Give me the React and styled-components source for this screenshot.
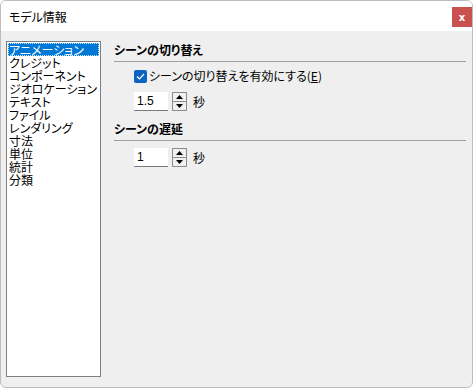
import React from "react";
import styled, { createGlobalStyle } from "styled-components";

const Global = createGlobalStyle`
  html, body { margin: 0; padding: 0; background: #ffffff; }
  body {
    font-family: "Noto Sans CJK JP", "Noto Sans", sans-serif;
    font-size: 12px;
    color: #000;
    font-feature-settings: "palt" 1;
  }
`;

const Win = styled.div`
  box-sizing: border-box;
  width: 473px;
  height: 388px;
  border: 1px solid #bdbdbd;
  border-radius: 6px;
  overflow: hidden;
  display: flex;
  flex-direction: column;
  background: #efefef;
`;

const TitleBar = styled.div`
  height: 30px;
  background: #ffffff;
  display: flex;
  align-items: center;
  justify-content: space-between;
  padding: 0 0 0 8px;
  flex-shrink: 0;
`;

const Title = styled.div`
  font-size: 12px;
  color: #000;
`;

const Close = styled.div`
  width: 20px;
  height: 20px;
  margin-top: 2px;
  background: #c9514f;
  color: #fff;
  font-family: "DejaVu Sans", sans-serif;
  font-weight: bold;
  font-size: 10px;
  display: flex;
  align-items: center;
  justify-content: center;
`;

const Body = styled.div`
  flex: 1;
  display: flex;
  padding: 10px 6px 10px 5px;
  gap: 13px;
`;

const List = styled.div`
  box-sizing: border-box;
  width: 95px;
  height: 336px;
  background: #fff;
  border: 1px solid #7a7f86;
  padding: 1px;
  display: flex;
  flex-direction: column;
`;

const Item = styled.div`
  height: 13px;
  line-height: 13px;
  font-size: 12px;
  padding-left: 1px;
  white-space: nowrap;
  background: ${(p) => (p.$sel ? "#0078d7" : "transparent")};
  color: ${(p) => (p.$sel ? "#fff" : "#000")};
  outline: ${(p) => (p.$sel ? "1px dotted #cfe4f7" : "none")};
  outline-offset: -1px;
`;

const Panel = styled.div`
  flex: 1;
  display: flex;
  flex-direction: column;
  padding-top: 1px;
`;

const Header = styled.div`
  font-weight: bold;
  font-size: 12px;
  line-height: 16px;
  padding-bottom: 3px;
  border-bottom: 1px solid #a0a0a0;
  margin-top: ${(p) => p.$top || 0}px;
`;

const Row = styled.div`
  display: flex;
  align-items: center;
  padding-left: ${(p) => p.$indent || 20}px;
  margin-top: ${(p) => p.$top || 0}px;
  gap: 4px;
`;

const Check = styled.div`
  width: 13px;
  height: 13px;
  border-radius: 2px;
  background: #0a64c2;
  display: flex;
  align-items: center;
  justify-content: center;
  margin-right: -2px;
`;

const Label = styled.span`
  font-size: 12px;
  line-height: 16px;
`;

const Mnemonic = styled.span`
  text-decoration: underline;
`;

const Input = styled.div`
  box-sizing: border-box;
  width: 34px;
  height: 19px;
  background: #fff;
  border-bottom: 1px solid #7a7a7a;
  font-family: "Liberation Sans", sans-serif;
  font-size: 12px;
  line-height: 18px;
  padding-left: 3px;
  color: #000;
`;

const Spin = styled.div`
  box-sizing: border-box;
  width: 15px;
  height: 19px;
  border: 1px solid #8c8c8c;
  background: #f0f0f0;
  display: flex;
  flex-direction: column;
`;

const SpinHalf = styled.div`
  flex: 1;
  display: flex;
  align-items: center;
  justify-content: center;
  border-top: ${(p) => (p.$bottom ? "1px solid #8c8c8c" : "none")};
`;

const Unit = styled.span`
  font-size: 12px;
  margin-left: 2px;
`;

const Spinner = ({ value }) => (
  <>
    <Input>{value}</Input>
    <Spin>
      <SpinHalf>
        <svg width="7" height="4" viewBox="0 0 7 4"><path d="M0 4 L3.5 0 L7 4 Z" fill="#000" /></svg>
      </SpinHalf>
      <SpinHalf $bottom>
        <svg width="7" height="4" viewBox="0 0 7 4"><path d="M0 0 L3.5 4 L7 0 Z" fill="#000" /></svg>
      </SpinHalf>
    </Spin>
    <Unit>秒</Unit>
  </>
);

const items = ["アニメーション", "クレジット", "コンポーネント", "ジオロケーション", "テキスト", "ファイル", "レンダリング", "寸法", "単位", "統計", "分類"];

export default function App() {
  return (
    <>
      <Global />
      <Win>
        <TitleBar>
          <Title>モデル情報</Title>
          <Close>x</Close>
        </TitleBar>
        <Body>
          <List>
            {items.map((t, i) => (
              <Item key={t} $sel={i === 0}>{t}</Item>
            ))}
          </List>
          <Panel>
            <Header>シーンの切り替え</Header>
            <Row $top={6}>
              <Check>
                <svg width="9" height="7" viewBox="0 0 9 7"><path d="M1 3.5 L3.5 6 L8 1" stroke="#fff" strokeWidth="1.2" fill="none" /></svg>
              </Check>
              <Label>シーンの切り替えを有効にする(<Mnemonic>E</Mnemonic>)</Label>
            </Row>
            <Row $top={8}>
              <Spinner value="1.5" />
            </Row>
            <Header $top={10}>シーンの遅延</Header>
            <Row $top={7}>
              <Spinner value="1" />
            </Row>
          </Panel>
        </Body>
      </Win>
    </>
  );
}
